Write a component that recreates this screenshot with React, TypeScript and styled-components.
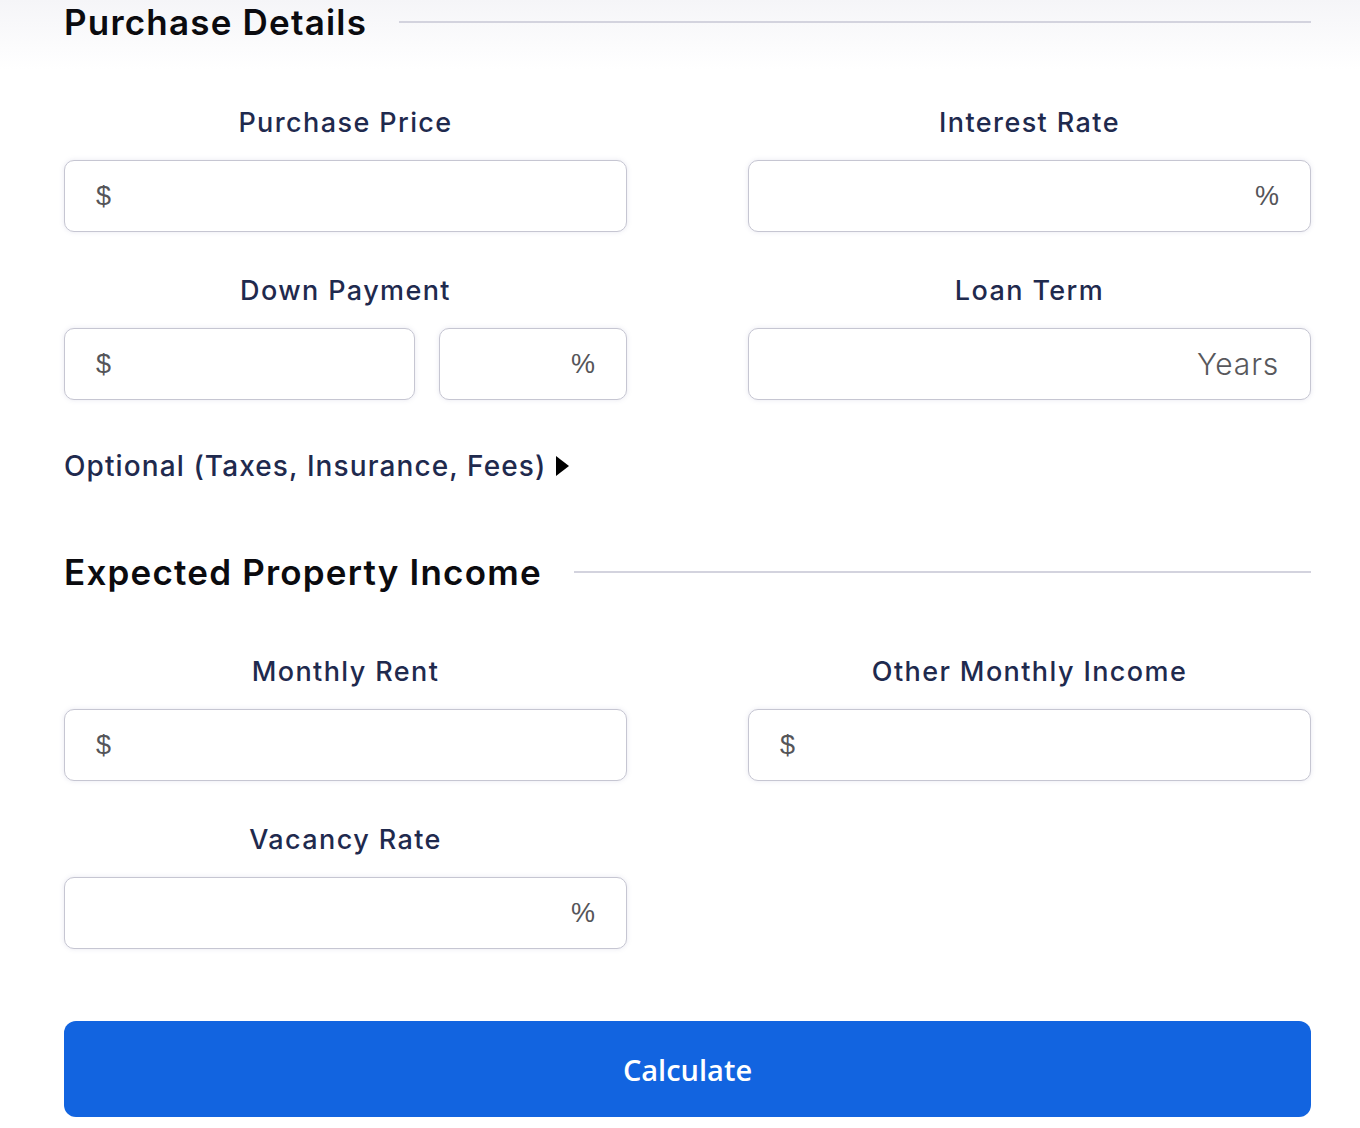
import styled, { createGlobalStyle } from 'styled-components'

const GlobalStyle = createGlobalStyle`
  html, body {
    margin: 0;
    padding: 0;
    background: #ffffff;
  }
  body {
    font-family: Inter, 'Noto Sans', sans-serif;
  }
`

const Page = styled.div`
  min-height: 1128px;
  box-sizing: border-box;
  padding: 0 49px 0 64px;
  background: linear-gradient(#f5f5f8 0, #ffffff 70px);
`

const SectionHead = styled.div<{ $top?: number }>`
  display: flex;
  align-items: center;
  gap: 32px;
  height: 44px;
  margin-top: ${(p) => p.$top ?? 0}px;

  h2 {
    margin: 0;
    font-size: 35px;
    font-weight: 600;
    color: #0b0b0f;
    letter-spacing: 1.2px;
    white-space: nowrap;
  }
  hr {
    flex: 1;
    border: 0;
    height: 2px;
    background: #d3d3de;
    margin: 0;
  }
`

const Grid = styled.div<{ $top: number }>`
  display: grid;
  grid-template-columns: 563px 563px;
  justify-content: space-between;
  row-gap: 41px;
  margin-top: ${(p) => p.$top}px;
`

const Field = styled.div`
  display: flex;
  flex-direction: column;
  gap: 19px;
`

const Label = styled.div`
  text-align: center;
  font-size: 27px;
  line-height: 36px;
  font-weight: 500;
  letter-spacing: 1.4px;
  color: #1f2a4e;
`

const InputRow = styled.div`
  display: flex;
  gap: 24px;
`

const Box = styled.div<{ $width?: number; $align?: 'left' | 'right' }>`
  box-sizing: border-box;
  height: 72px;
  flex: ${(p) => (p.$width ? `0 0 ${p.$width}px` : '1 1 auto')};
  display: flex;
  align-items: center;
  justify-content: ${(p) => (p.$align === 'right' ? 'flex-end' : 'flex-start')};
  padding: 0 31px;
  border: 1.5px solid #c6c6d2;
  border-radius: 10px;
  background: #ffffff;
  box-shadow: 0 0 5px rgba(120, 120, 170, 0.18);
  font-family: 'Liberation Sans', Arial, sans-serif;
  font-size: 27px;
  color: #555559;
`

const Unit = styled.span`
  font-family: Inter, 'Noto Sans', sans-serif;
  font-weight: 300;
  font-size: 30px;
  letter-spacing: 0.8px;
  color: #58585c;
`

const Optional = styled.div`
  display: flex;
  align-items: center;
  gap: 10px;
  height: 40px;
  margin-top: 46px;
  font-size: 28px;
  font-weight: 500;
  letter-spacing: 1.1px;
  color: #1f2a4e;
`

const Caret = styled.span`
  width: 0;
  height: 0;
  border-top: 10px solid transparent;
  border-bottom: 10px solid transparent;
  border-left: 13px solid #000000;
`

const Button = styled.button`
  display: block;
  width: 100%;
  height: 96px;
  margin-top: 72px;
  border: 0;
  border-radius: 12px;
  background: #1264e0;
  color: #ffffff;
  font-family: 'Open Sans', sans-serif;
  font-size: 29px;
  font-weight: 600;
  cursor: pointer;
`

type FieldProps = { label: string }

const MoneyField = ({ label }: FieldProps) => (
  <Field>
    <Label>{label}</Label>
    <Box>$</Box>
  </Field>
)

const PercentField = ({ label }: FieldProps) => (
  <Field>
    <Label>{label}</Label>
    <Box $align='right'>%</Box>
  </Field>
)

export default function App() {
  return (
    <Page>
      <GlobalStyle />
      <SectionHead>
        <h2>Purchase Details</h2>
        <hr />
      </SectionHead>
      <Grid $top={61}>
        <MoneyField label='Purchase Price' />
        <PercentField label='Interest Rate' />
        <Field>
          <Label>Down Payment</Label>
          <InputRow>
            <Box>$</Box>
            <Box $width={188} $align='right'>%</Box>
          </InputRow>
        </Field>
        <Field>
          <Label>Loan Term</Label>
          <Box $align='right'>
            <Unit>Years</Unit>
          </Box>
        </Field>
      </Grid>
      <Optional>
        Optional (Taxes, Insurance, Fees)
        <Caret />
      </Optional>
      <SectionHead $top={64}>
        <h2>Expected Property Income</h2>
        <hr />
      </SectionHead>
      <Grid $top={60}>
        <MoneyField label='Monthly Rent' />
        <MoneyField label='Other Monthly Income' />
        <PercentField label='Vacancy Rate' />
      </Grid>
      <Button>Calculate</Button>
    </Page>
  )
}
